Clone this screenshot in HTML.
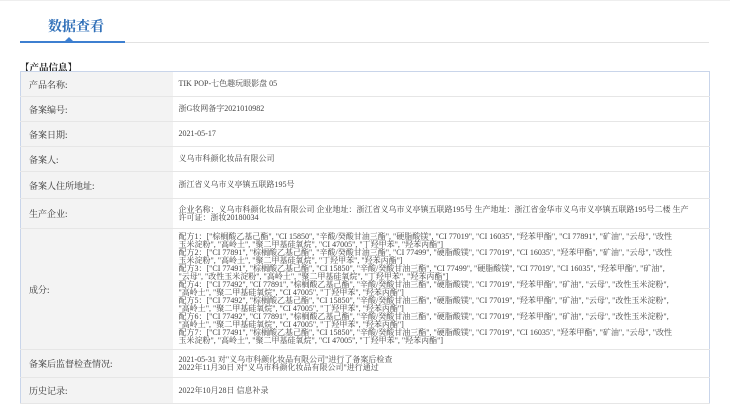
<!DOCTYPE html>
<html><head><meta charset="utf-8"><style>
*{margin:0;padding:0;box-sizing:border-box}
body{width:730px;height:403px;overflow:hidden;background:#fff;font-family:"Liberation Serif","Noto Serif CJK SC",serif;color:#333;position:relative}
.topline{position:absolute;left:0;top:0;width:730px;height:1px;background:#eee}
.title{position:absolute;left:48px;top:16px;font-size:14px;color:#2f6fb8;font-weight:bold}
.gl{position:absolute;left:20px;top:42px;width:689px;height:1px;background:#e2e2e2}
.bl{position:absolute;left:20px;top:41px;width:105px;height:2px;background:#3d7fd0}
.tri{position:absolute;left:65px;top:37px;width:0;height:0;border-left:4px solid transparent;border-right:4px solid transparent;border-bottom:4px solid #3d7fd0}
.sec{position:absolute;left:20px;top:60px;font-size:9.5px;font-weight:bold;color:#222}
table{position:absolute;left:20px;top:71px;width:690px;border-collapse:collapse;border:1px solid #c9d5ea;font-size:8px;table-layout:fixed}
td{border-bottom:1px solid #e6e6e6;vertical-align:middle;overflow:hidden}
td.l{width:152px;background:#f3f3f3;padding-left:8px;font-size:9px;color:#333}
td.v{padding:0 34px 0 6px;line-height:8px;color:#444;letter-spacing:0}
</style></head><body>
<div class="topline"></div>
<div class="title">数据查看</div>
<div class="gl"></div><div class="bl"></div><div class="tri"></div>
<div class="sec">【产品信息】</div>
<table>
<tr style="height:25px"><td class="l">产品名称:</td><td class="v">TIK POP-七色趣玩眼影盘 05</td></tr>
<tr style="height:25px"><td class="l">备案编号:</td><td class="v">浙G妆网备字2021010982</td></tr>
<tr style="height:25px"><td class="l">备案日期:</td><td class="v">2021-05-17</td></tr>
<tr style="height:25px"><td class="l">备案人:</td><td class="v">义乌市科颜化妆品有限公司</td></tr>
<tr style="height:27px"><td class="l">备案人住所地址:</td><td class="v">浙江省义乌市义亭镇五联路195号</td></tr>
<tr style="height:30px"><td class="l">生产企业:</td><td class="v" style="padding-right:14px">企业名称：义乌市科颜化妆品有限公司 企业地址：浙江省义乌市义亭镇五联路195号 生产地址：浙江省金华市义乌市义亭镇五联路195号二楼 生产许可证：浙妆20180034</td></tr>
<tr style="height:121px"><td class="l">成分:</td><td class="v">配方1：["棕榈酸乙基己酯", "CI 15850", "辛酸/癸酸甘油三酯", "硬脂酸镁", "CI 77019", "CI 16035", "羟苯甲酯", "CI 77891", "矿油", "云母", "改性玉米淀粉", "高岭土", "聚二甲基硅氧烷", "CI 47005", "丁羟甲苯", "羟苯丙酯"]<br>配方2：["CI 77891", "棕榈酸乙基己酯", "辛酸/癸酸甘油三酯", "CI 77499", "硬脂酸镁", "CI 77019", "CI 16035", "羟苯甲酯", "矿油", "云母", "改性玉米淀粉", "高岭土", "聚二甲基硅氧烷", "丁羟甲苯", "羟苯丙酯"]<br>配方3：["CI 77491", "棕榈酸乙基己酯", "CI 15850", "辛酸/癸酸甘油三酯", "CI 77499", "硬脂酸镁", "CI 77019", "CI 16035", "羟苯甲酯", "矿油", "云母", "改性玉米淀粉", "高岭土", "聚二甲基硅氧烷", "丁羟甲苯", "羟苯丙酯"]<br>配方4：["CI 77492", "CI 77891", "棕榈酸乙基己酯", "辛酸/癸酸甘油三酯", "硬脂酸镁", "CI 77019", "羟苯甲酯", "矿油", "云母", "改性玉米淀粉", "高岭土", "聚二甲基硅氧烷", "CI 47005", "丁羟甲苯", "羟苯丙酯"]<br>配方5：["CI 77492", "棕榈酸乙基己酯", "CI 15850", "辛酸/癸酸甘油三酯", "硬脂酸镁", "CI 77019", "羟苯甲酯", "矿油", "云母", "改性玉米淀粉", "高岭土", "聚二甲基硅氧烷", "CI 47005", "丁羟甲苯", "羟苯丙酯"]<br>配方6：["CI 77492", "CI 77891", "棕榈酸乙基己酯", "辛酸/癸酸甘油三酯", "硬脂酸镁", "CI 77019", "羟苯甲酯", "矿油", "云母", "改性玉米淀粉", "高岭土", "聚二甲基硅氧烷", "CI 47005", "丁羟甲苯", "羟苯丙酯"]<br>配方7：["CI 77491", "棕榈酸乙基己酯", "CI 15850", "辛酸/癸酸甘油三酯", "硬脂酸镁", "CI 77019", "CI 16035", "羟苯甲酯", "矿油", "云母", "改性玉米淀粉", "高岭土", "聚二甲基硅氧烷", "CI 47005", "丁羟甲苯", "羟苯丙酯"]</td></tr>
<tr style="height:28px"><td class="l">备案后监督检查情况:</td><td class="v">2021-05-31 对"义乌市科颜化妆品有限公司"进行了备案后检查<br>2022年11月30日 对"义乌市科颜化妆品有限公司"进行通过</td></tr>
<tr style="height:26px"><td class="l">历史记录:</td><td class="v">2022年10月28日 信息补录</td></tr>
</table>
</body></html>
